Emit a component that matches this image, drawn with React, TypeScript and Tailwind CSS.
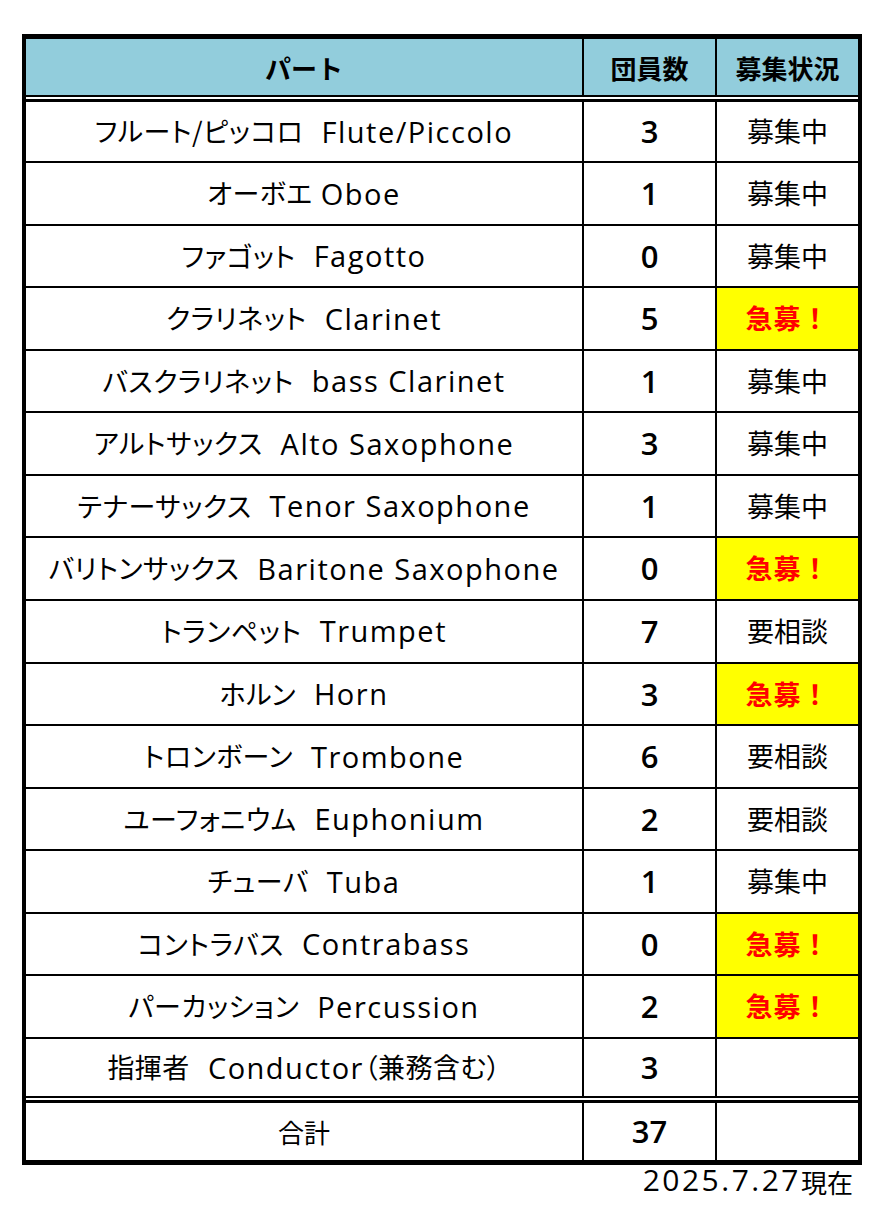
import React from "react";

type Row = { jp: string; en: string; gap: "single" | "double"; n: string; st: string };

const rows: Row[] = [
  { jp: "フルート/ピッコロ", en: "Flute/Piccolo", gap: "double", n: "3", st: "募集中" },
  { jp: "オーボエ", en: "Oboe", gap: "single", n: "1", st: "募集中" },
  { jp: "ファゴット", en: "Fagotto", gap: "double", n: "0", st: "募集中" },
  { jp: "クラリネット", en: "Clarinet", gap: "double", n: "5", st: "急募！" },
  { jp: "バスクラリネット", en: "bass Clarinet", gap: "double", n: "1", st: "募集中" },
  { jp: "アルトサックス", en: "Alto Saxophone", gap: "double", n: "3", st: "募集中" },
  { jp: "テナーサックス", en: "Tenor Saxophone", gap: "double", n: "1", st: "募集中" },
  { jp: "バリトンサックス", en: "Baritone Saxophone", gap: "double", n: "0", st: "急募！" },
  { jp: "トランペット", en: "Trumpet", gap: "double", n: "7", st: "要相談" },
  { jp: "ホルン", en: "Horn", gap: "double", n: "3", st: "急募！" },
  { jp: "トロンボーン", en: "Trombone", gap: "double", n: "6", st: "要相談" },
  { jp: "ユーフォニウム", en: "Euphonium", gap: "double", n: "2", st: "要相談" },
  { jp: "チューバ", en: "Tuba", gap: "double", n: "1", st: "募集中" },
  { jp: "コントラバス", en: "Contrabass", gap: "double", n: "0", st: "急募！" },
  { jp: "パーカッション", en: "Percussion", gap: "double", n: "2", st: "急募！" },
  { jp: "指揮者", en: "Conductor", gap: "double", n: "3", st: "" },
];

const JP = "[font-family:'Noto_Sans_CJK_JP',sans-serif] [font-feature-settings:'palt'] text-[27px] tracking-[0.5px]";
const EN = "[font-family:'Open_Sans','Noto_Sans_CJK_JP',sans-serif] text-[29px] tracking-[1.5px]";
const NUM = "[font-family:'Open_Sans',sans-serif] text-[31px] font-semibold";

function heightClass(i: number) {
  if (i === 0) return "h-[59px]";
  if (i === rows.length - 1) return "h-[57px]";
  return "h-[60.57px]";
}

export default function App() {
  return (
    <div className="w-[884px] min-h-[1220px] bg-white text-black">
      <div className="ml-[22px] pt-[34px] w-[840px]">
        <div className="flex flex-col border-x-4 border-y-[5px] border-black bg-black">
          {/* header */}
          <div className="grid grid-cols-[556px_131px_141px] gap-x-[2px] h-[56px]">
            <div className="bg-[#92cddc] flex items-center justify-center [font-family:'Noto_Sans_CJK_JP',sans-serif] text-[26px] font-bold">
              パート
            </div>
            <div className="bg-[#92cddc] flex items-center justify-center [font-family:'Noto_Sans_CJK_JP',sans-serif] text-[26px] font-bold">
              団員数
            </div>
            <div className="bg-[#92cddc] flex items-center justify-center [font-family:'Noto_Sans_CJK_JP',sans-serif] text-[26px] font-bold">
              募集状況
            </div>
          </div>
          {/* double line */}
          <div className="h-[2px]" />
          <div className="h-[2px] bg-white" />
          <div className="h-[3px]" />
          {/* body rows */}
          <div className="flex flex-col gap-y-[2px]">
            {rows.map((r, i) => (
              <div key={i} className={`grid grid-cols-[556px_131px_141px] gap-x-[2px] ${heightClass(i)}`}>
                <div className="bg-white flex items-center justify-center whitespace-nowrap">
                  <span className={JP}>{r.jp}</span>
                  <span className={`${EN} ${r.gap === "double" ? "ml-[18px]" : "ml-[8px]"}`}>{r.en}</span>
                  {r.en === "Conductor" && <span className={JP}>（兼務含む）</span>}
                </div>
                <div className="bg-white flex items-center justify-center">
                  <span className={NUM}>{r.n}</span>
                </div>
                {r.st === "急募！" ? (
                  <div className="bg-[#ffff00] flex items-center justify-center">
                    <span className="[font-family:'Noto_Sans_CJK_JP',sans-serif] text-[27px] font-bold text-[#ff0000] tracking-[1px]">
                      急募！
                    </span>
                  </div>
                ) : (
                  <div className="bg-white flex items-center justify-center">
                    <span className="[font-family:'Noto_Sans_CJK_JP',sans-serif] text-[27px]">{r.st}</span>
                  </div>
                )}
              </div>
            ))}
          </div>
          {/* double line */}
          <div className="h-[2.5px]" />
          <div className="h-[2px] bg-white" />
          <div className="h-[2.5px]" />
          {/* total */}
          <div className="grid grid-cols-[556px_131px_141px] gap-x-[2px] h-[57px]">
            <div className="bg-white flex items-center justify-center">
              <span className="[font-family:'Noto_Sans_CJK_JP',sans-serif] text-[26px]">合計</span>
            </div>
            <div className="bg-white flex items-center justify-center">
              <span className={NUM}>37</span>
            </div>
            <div className="bg-white" />
          </div>
        </div>
        <div className="flex justify-end pr-[9px] leading-none h-[40px] items-start">
          <span className="[font-family:'Open_Sans',sans-serif] text-[30px] tracking-[2.5px] leading-none">2025.7.27</span>
          <span className="[font-family:'Noto_Sans_CJK_JP',sans-serif] text-[26px] leading-none mt-[4px]">現在</span>
        </div>
      </div>
    </div>
  );
}
